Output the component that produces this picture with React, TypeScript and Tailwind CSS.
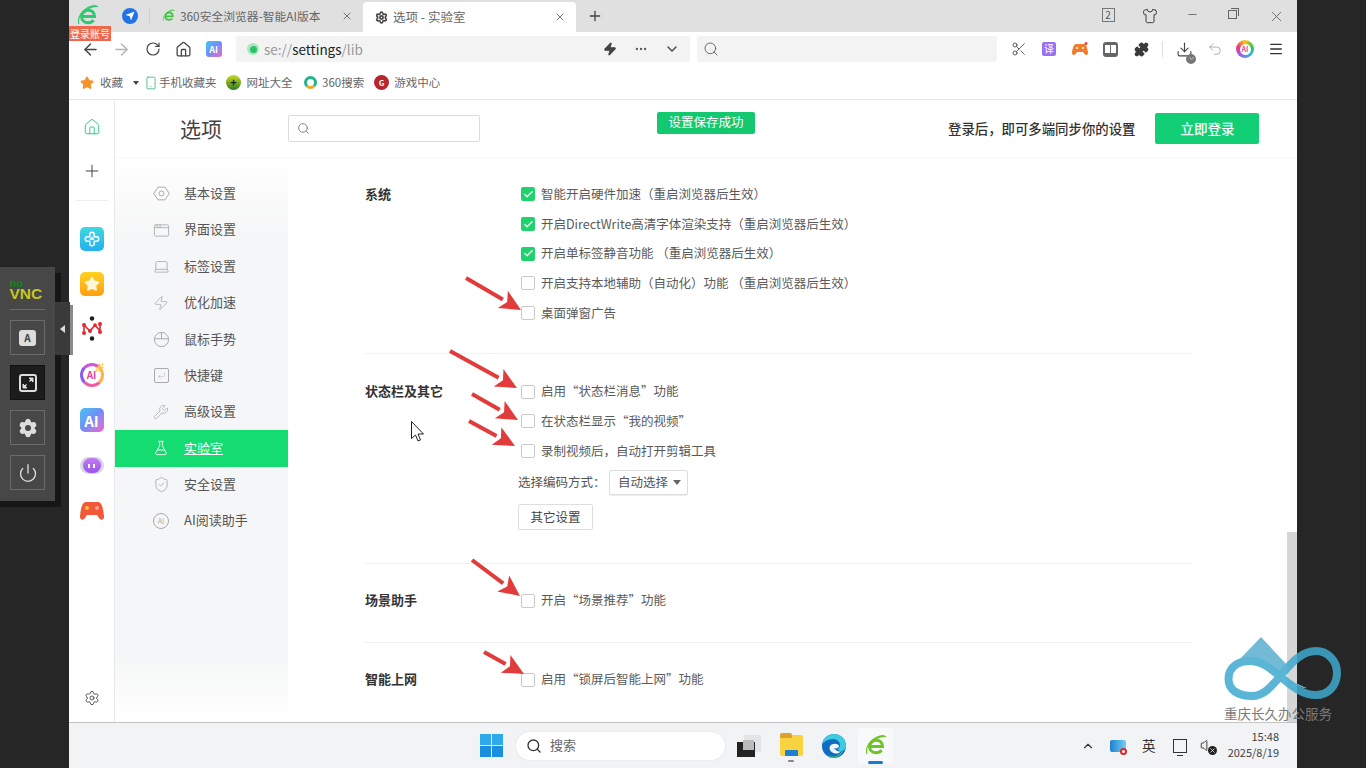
import React from "react";
import {
  ArrowLeft, ArrowRight, RotateCw, House, Zap, Ellipsis, ChevronDown, Search, Scissors, Puzzle, Download,
  Undo2, Menu, X, Plus, Minus, Shirt, Star, Smartphone, Settings, AppWindow, Laptop, Wrench,
  FlaskConical, ShieldCheck, Power, Check, ChevronUp, CornerDownLeft, Sparkles, Volume,
} from "lucide-react";

function ELogo({ size = 22, color = "#2fc96f" }: { size?: number; color?: string }) {
  return (
    <svg width={size} height={size} viewBox="0 0 24 24" fill="none">
      <path d="M6 12.5h12.5c0-4-2.8-6.3-6.2-6.3S5.6 9 5.6 12.5s2.8 6.2 6.6 6.2c2.4 0 4.2-1 5.4-2.5" stroke={color} strokeWidth="3" />
      <path d="M3 20C1 15 5 5 16 2c2-.5 4-.5 5 .5-4-.5-13 3-15 9" stroke={color} strokeWidth="1.2" />
    </svg>
  );
}

function Tile({ from, children }: { from: string; children: React.ReactNode }) {
  return <div className={`flex h-[24px] w-[24px] items-center justify-center rounded-[5px] ${from}`}>{children}</div>;
}

function RailIcons() {
  return [
    <Tile key="a" from="bg-gradient-to-b from-[#3fd8e0] to-[#25b0ee]">
      <svg width="18" height="18" viewBox="0 0 24 24" fill="none" stroke="#fff" strokeWidth="2">
        <path d="M9 6a3 3 0 0 1 6 0v3h3a3 3 0 0 1 0 6h-3v3a3 3 0 0 1-6 0v-3H6a3 3 0 0 1 0-6h3z" />
        <path d="M9 12h6M12 9v3" />
      </svg>
    </Tile>,
    <Tile key="b" from="bg-gradient-to-b from-[#ffd21f] to-[#ff9e12]">
      <Star size={16} fill="#fff7d8" stroke="#fff7d8" />
    </Tile>,
    <svg key="c" width="24" height="26" viewBox="0 0 24 26" fill="none">
      <path d="M4 9l6 6 5-6 5 6M4 9v7M20 8v7" stroke="#e8262f" strokeWidth="1.6" />
      <circle cx="4" cy="9" r="2" fill="#e8262f" /><circle cx="20" cy="8" r="2" fill="#e8262f" />
      <circle cx="4" cy="17" r="2" fill="#e8262f" /><circle cx="20" cy="16" r="2" fill="#e8262f" />
      <circle cx="10" cy="15" r="2" fill="#e8262f" /><circle cx="15" cy="9" r="1.8" fill="#e8262f" />
      <circle cx="12" cy="2.5" r="2.2" fill="#1c1c1c" /><circle cx="12" cy="22.5" r="2.2" fill="#1c1c1c" />
    </svg>,
    <div key="d" className="relative flex h-[24px] w-[24px] items-center justify-center rounded-full border-[3px] border-l-[#8a5cf0] border-t-[#d354d9] border-r-[#ffb14a] border-b-[#ef5fa0]">
      <span className="text-[10px] font-bold leading-none text-[#e0479c]">AI</span>
      <Sparkles size={9} fill="#ffc533" stroke="#ffc533" className="absolute -right-[3px] -top-[3px]" />
    </div>,
    <Tile key="e" from="bg-gradient-to-br from-[#38c4f5] via-[#6f8cf6] to-[#f05bc9]">
      <span className="text-[15px] font-bold leading-none text-white">AI</span>
    </Tile>,
    <div key="f" className="flex h-[17px] w-[24px] items-center justify-center rounded-full bg-[#d8d8e2]">
      <div className="flex h-[15px] w-[18px] items-center justify-center gap-[3px] rounded-full bg-gradient-to-b from-[#c27af5] to-[#9a54ea]">
        <span className="h-[4px] w-[2px] bg-white" /><span className="h-[4px] w-[2px] bg-white" />
      </div>
    </div>,
    <svg key="g" width="24" height="20" viewBox="0 0 24 20">
      <path d="M6 1h12c3 0 5 4 6 14 .3 4-3 5-5 2l-2-3H7l-2 3c-2 3-5.300 2-5-2C1 5 3 1 6 1z" fill="#f2593a" />
      <circle cx="7" cy="7" r="2" fill="#ffc533" /><circle cx="17" cy="7" r="2" fill="#f8a18d" />
    </svg>,
  ];
}

const NAV: [string, React.ReactNode][] = [
  ["基本设置", <svg width="17" height="17" viewBox="0 0 24 24" fill="none" stroke="currentColor" strokeWidth="1.4"><path d="M7 3h10l6 9-6 9H7l-6-9z" /><circle cx="12" cy="12" r="3.500" /></svg>],
  ["界面设置", <AppWindow size={17} strokeWidth={1.2} />],
  ["标签设置", <Laptop size={17} strokeWidth={1.2} />],
  ["优化加速", <Zap size={16} strokeWidth={1.2} />],
  ["鼠标手势", <svg width="17" height="17" viewBox="0 0 24 24" fill="none" stroke="currentColor" strokeWidth="1.4"><rect x="2" y="2" width="20" height="20" rx="10" /><path d="M2 11h20M12 2v9" /></svg>],
  ["快捷键", <CornerDownLeft size={15} strokeWidth={1.2} className="rounded-[2px] border border-[#aaa] p-[2px]" />],
  ["高级设置", <Wrench size={16} strokeWidth={1.2} />],
  ["实验室", <FlaskConical size={16} strokeWidth={1.4} />],
  ["安全设置", <ShieldCheck size={17} strokeWidth={1.2} />],
  ["AI阅读助手", <span className="flex h-[16px] w-[16px] items-center justify-center rounded-full border border-[#aaa] text-[7px]">AI</span>],
];

function Row({ text, on = false }: { text: string; on?: boolean }) {
  return (
    <div className="flex h-[29.7px] items-center">
      {on ? (
        <span className="flex h-[14px] w-[14px] items-center justify-center rounded-[2px] bg-[#1fd26e]">
          <Check size={11} strokeWidth={2.6} color="#fff" />
        </span>
      ) : (
        <span className="h-[14px] w-[14px] rounded-[2px] border border-[#c9c9c9] bg-white" />
      )}
      <span className="ml-[6px] whitespace-nowrap text-[12.5px] text-[#5a5a5a]">{text}</span>
    </div>
  );
}

function Section({ label, pt, pb, children, last }: { label: string; pt: string; pb: string; children: React.ReactNode; last?: boolean }) {
  return (
    <div className={`flex ${pt} ${pb} ${last ? "" : "border-b border-[#f2f2f2]"}`}>
      <div className="h-[29.7px] w-[157px] pl-px text-[13px] font-bold leading-[27px] text-[#333]">{label}</div>
      <div className="flex flex-col">{children}</div>
    </div>
  );
}

const ARROWS = [
  [466, 278, 521, 310],
  [450, 351, 517, 388],
  [472, 394, 518, 420],
  [469, 421, 515, 446],
  [472, 560, 520, 596],
  [484, 652, 524, 674],
];

function Arrow({ a }: { a: number[] }) {
  const [x1, y1, x2, y2] = a;
  const len = Math.hypot(x2 - x1, y2 - y1);
  const ux = (x2 - x1) / len, uy = (y2 - y1) / len;
  const bx = x2 - ux * 21, by = y2 - uy * 21;
  const nx = -uy, ny = ux;
  return (
    <>
      <line x1={x1} y1={y1} x2={bx} y2={by} stroke="#e23b3b" strokeWidth="4" />
      <polygon points={`${x2},${y2} ${bx + nx * 10},${by + ny * 10} ${bx + ux * 5},${by + uy * 5} ${bx - nx * 10},${by - ny * 10}`} fill="#e23b3b" />
    </>
  );
}

function VncButton({ children, active }: { children: React.ReactNode; active?: boolean }) {
  return (
    <div className={`flex h-[35px] w-[35px] items-center justify-center border ${active ? "border-[#111] bg-[#1c1c1c]" : "border-[#6a6a6a]"}`}>
      {children}
    </div>
  );
}

export default function App() {
  return (
    <div className="relative flex h-[768px] w-[1366px] overflow-hidden bg-[#262626] font-['Noto_Sans_CJK_SC','Noto_Sans',sans-serif]">
      <div className="w-[69px] shrink-0" />
      <div className="flex w-[1228px] shrink-0 flex-col bg-white">
        {/* tab strip */}
        <div className="flex h-[32px] shrink-0 items-center bg-[#e0e0e0]">
          <div className="flex w-[38px] justify-center"><ELogo size={24} /></div>
          <div className="ml-[15px] flex h-[16px] w-[16px] items-center justify-center rounded-full bg-[#2273e6]">
            <svg width="10" height="10" viewBox="0 0 10 10"><path d="M9.500.5 6 9.500 4.800 5.200.5 4z" fill="#fff" /></svg>
          </div>
          <div className="ml-[11px] h-[16px] w-px bg-[#cdcdcd]" />
          <div className="flex h-full w-[212px] items-center pl-[12px]">
            <ELogo size={14} color="#3fc43f" />
            <span className="ml-[4px] whitespace-nowrap text-[11.8px] text-[#666]">360安全浏览器-智能AI版本</span>
            <X size={12} strokeWidth={1.6} color="#555" className="ml-auto mr-[9px]" />
          </div>
          <div className="ml-px flex h-[30px] w-[213px] items-center self-end rounded-t-[4px] bg-white pl-[12px]">
            <Settings size={13} strokeWidth={3} color="#444" />
            <span className="ml-[5px] whitespace-nowrap text-[12.5px] text-[#666]">选项 - 实验室</span>
            <X size={12} strokeWidth={1.6} color="#555" className="ml-auto mr-[10px]" />
          </div>
          <Plus size={16} strokeWidth={2} color="#444" className="ml-[11px]" />
          <div className="ml-auto flex">
            <div className="flex w-[42px] justify-center">
              <span className="flex h-[14px] w-[13px] items-center justify-center border border-[#777] text-[10px] leading-none text-[#555]">2</span>
            </div>
            <div className="flex w-[42px] justify-center"><Shirt size={16} strokeWidth={1.4} color="#333" /></div>
            <div className="flex w-[42px] justify-center"><Minus size={13} color="#777" /></div>
            <div className="flex w-[42px] justify-center">
              <span className="relative mr-[3px] mt-[2px] h-[9px] w-[9px] border border-[#666]"><span className="absolute -right-[3px] -top-[3px] h-[8px] w-[8px] border-r border-t border-[#666]" /></span>
            </div>
            <div className="flex w-[42px] justify-center"><X size={17} strokeWidth={1.1} color="#555" /></div>
          </div>
        </div>
        {/* toolbar */}
        <div className="flex h-[34px] shrink-0 items-center">
          <div className="flex w-[6px]" />
          {[
            <ArrowLeft key="1" size={19} strokeWidth={1.8} color="#444" />,
            <ArrowRight key="2" size={19} strokeWidth={1.8} color="#b4b4b4" />,
            <RotateCw key="3" size={16} strokeWidth={1.8} color="#444" />,
            <House key="4" size={17} strokeWidth={1.8} color="#444" />,
            <span key="5" className="mr-[2px] flex h-[16px] w-[16px] items-center justify-center rounded-[3px] bg-gradient-to-br from-[#38c4f5] via-[#6f8cf6] to-[#f05bc9] text-[9px] font-bold leading-none text-white">AI</span>,
          ].map((ic, i) => (
            <div key={i} className="flex w-[31px] justify-center">{ic}</div>
          ))}
          <div className="ml-[6px] flex h-[26px] w-[454px] items-center rounded-[3px] bg-[#f3f3f3] pl-[11px]">
            <span className="flex h-[12px] w-[12px] items-center justify-center rounded-full bg-[#a9e8c0]"><span className="h-[7px] w-[7px] rounded-full bg-[#2cc26a]" /></span>
            <span className="ml-[5px] text-[13.5px] text-[#999]">se://<span className="text-[#222]">settings</span>/lib</span>
            <Zap size={14} fill="#444" color="#444" className="ml-auto" />
            <Ellipsis size={14} color="#555" className="ml-[17px]" />
            <ChevronDown size={16} strokeWidth={2} color="#444" className="ml-[16px] mr-[10px]" />
          </div>
          <div className="ml-[7px] flex h-[26px] w-[300px] items-center rounded-[3px] bg-[#f3f3f3] pl-[6px]">
            <Search size={16} strokeWidth={1.3} color="#555" />
          </div>
          <div className="ml-[6px] flex w-[31px] justify-center"><Scissors size={16} strokeWidth={1.4} color="#555" /></div>
          <div className="flex w-[30px] justify-center">
            <span className="flex h-[14px] w-[14px] items-center justify-center rounded-[2px] bg-[#9a6ff0] text-[10px] leading-none text-white">译</span>
          </div>
          <div className="flex w-[31px] justify-center">
            <svg width="16" height="14" viewBox="0 0 16 14">
              <path d="M4 2h8c2 0 3 3 4 8 .3 3-2 4-3.500 2L11 10H5l-1.500 2C2 14-.3 13 0 10c1-5 2-8 4-8z" fill="#f07c2c" />
              <circle cx="5" cy="6" r="1" fill="#fff" /><circle cx="11" cy="6" r="1" fill="#fff" /><circle cx="14" cy="1.500" r="1.500" fill="#ee3b3b" />
            </svg>
          </div>
          <div className="flex w-[31px] justify-center">
            <span className="flex h-[15px] w-[15px] items-center justify-center gap-px rounded-[3px] bg-[#666]">
              <span className="h-[8px] w-[5px] bg-white" /><span className="h-[8px] w-[5px] bg-white" />
            </span>
          </div>
          <div className="flex w-[31px] justify-center"><Puzzle size={15} fill="#3a3a3a" color="#3a3a3a" /></div>
          <div className="ml-[5px] h-[16px] w-px bg-[#e0e0e0]" />
          <div className="relative ml-[6px] flex w-[30px] justify-center">
            <Download size={17} strokeWidth={1.6} color="#444" />
            <span className="absolute bottom-[-6px] right-[3px] flex h-[10px] w-[10px] items-center justify-center rounded-full bg-[#777]"><ChevronDown size={7} color="#fff" /></span>
          </div>
          <div className="flex w-[31px] justify-center"><Undo2 size={16} strokeWidth={1.4} color="#aaa" /></div>
          <div className="flex w-[30px] justify-center">
            <span className="flex h-[18px] w-[18px] items-center justify-center rounded-full bg-[conic-gradient(#f5c518,#35c65c,#2fb0ee,#9a5cf0,#ee3b7b,#f5c518)]">
              <span className="flex h-[11px] w-[11px] items-center justify-center rounded-full bg-white text-[7px] font-bold leading-none text-[#e0479c]">AI</span>
            </span>
          </div>
          <div className="flex w-[31px] justify-center"><Menu size={16} strokeWidth={2} color="#333" /></div>
        </div>
        {/* bookmarks */}
        <div className="flex h-[34px] shrink-0 items-center border-b border-[#e6e6e6] pl-[11px] text-[11.5px] text-[#666]">
          <Star size={14} fill="#f5922a" color="#f5922a" />
          <span className="ml-[6px]">收藏</span>
          <span className="ml-[10px] h-0 w-0 border-x-[3px] border-t-[4px] border-x-transparent border-t-[#444]" />
          <Smartphone size={14} strokeWidth={1.4} color="#35b36f" className="ml-[5px]" />
          <span className="ml-px">手机收藏夹</span>
          <span className="ml-[9.5px] flex h-[15px] w-[15px] items-center justify-center rounded-full bg-gradient-to-b from-[#c7dc1e] to-[#2a7d22] text-[11px] font-bold leading-none text-[#222]">+</span>
          <span className="ml-[5.5px]">网址大全</span>
          <span className="ml-[11px] h-[13px] w-[13px] rounded-full border-[3px] border-[#1db588] border-b-[#f5a623]" />
          <span className="ml-[5.5px]">360搜索</span>
          <span className="ml-[10px] flex h-[15px] w-[15px] items-center justify-center rounded-full bg-[#b8252d] text-[8px] font-bold leading-none text-white">G</span>
          <span className="ml-[5px]">游戏中心</span>
        </div>
        {/* body */}
        <div className="flex min-h-0 flex-1">
          <div className="flex w-[46px] shrink-0 flex-col items-center border-r border-[#e8e8e8]">
            <div className="flex h-[54px] items-center"><House size={18} strokeWidth={1.3} color="#2fc98a" /></div>
            <div className="flex h-[34px] items-center"><Plus size={20} strokeWidth={1} color="#222" /></div>
            <div className="mt-[12px] h-px w-[32px] bg-[#eeeeee]" />
            <div className="mt-[15px] flex flex-col">
              {RailIcons().map((ic, i) => (
                <div key={i} className="flex h-[45.4px] items-center justify-center">{ic}</div>
              ))}
            </div>
            <Settings size={16} strokeWidth={1.5} color="#555" className="mb-[16px] mt-auto" />
          </div>
          <div className="flex min-w-0 flex-1 flex-col">
            {/* header */}
            <div className="flex h-[58px] shrink-0 items-center border-b border-[#f8f8f8]">
              <span className="ml-[65px] text-[21px] text-[#444]">选项</span>
              <div className="ml-[66px] flex h-[27px] w-[192px] items-center rounded-[2px] border border-[#dcdcdc] pl-[8px]">
                <Search size={13} strokeWidth={1.4} color="#666" />
              </div>
              <div className="ml-[177px] mb-[12px] flex h-[22px] w-[98px] items-center justify-center rounded-[2px] bg-[#14c870] text-[12.5px] text-white">设置保存成功</div>
              <span className="ml-[193px] whitespace-nowrap text-[13.4px] font-medium text-[#333]">登录后，即可多端同步你的设置</span>
              <div className="ml-[20px] flex h-[31px] w-[104px] items-center justify-center rounded-[2px] bg-[#12cf76] text-[13.5px] font-medium text-white">立即登录</div>
            </div>
            <div className="flex min-h-0 flex-1">
              <div className="w-[173px] shrink-0 bg-[linear-gradient(#fff_0,#f5f6f7_80px,#f5f6f7_500px,#fff_560px)] pt-[17.5px]">
                {NAV.map(([t, ic]) => {
                  const active = t === "实验室";
                  return (
                    <div key={t} className={`flex h-[36.4px] items-center ${active ? "bg-[#14dc70] text-white" : "text-[#555]"}`}>
                      <div className={`flex w-[69px] justify-center pl-[23px] ${active ? "text-white" : "text-[#aaa]"}`}>{ic}</div>
                      <span className={`pb-[2px] text-[13px] ${active ? "underline" : ""}`}>{t}</span>
                    </div>
                  );
                })}
              </div>
              <div className="ml-[76px] w-[828px] shrink-0">
                <Section label="系统" pt="pt-[21.5px]" pb="pb-[25px]">
                  <Row on text="智能开启硬件加速（重启浏览器后生效）" />
                  <Row on text="开启DirectWrite高清字体渲染支持（重启浏览器后生效）" />
                  <Row on text="开启单标签静音功能 （重启浏览器后生效）" />
                  <Row text="开启支持本地辅助（自动化）功能 （重启浏览器后生效）" />
                  <Row text="桌面弹窗广告" />
                </Section>
                <Section label="状态栏及其它" pt="pt-[23px]" pb="pb-[33px]">
                  <Row text="启用“状态栏消息”功能" />
                  <Row text="在状态栏显示“我的视频”" />
                  <Row text="录制视频后，自动打开剪辑工具" />
                  <div className="-ml-[3px] mt-[3px] flex h-[26px] items-center">
                    <span className="w-[91px] text-[12.5px] text-[#555]">选择编码方式：</span>
                    <div className="flex h-[25px] w-[79px] items-center rounded-[2px] border border-[#ddd] pl-[8px] text-[12.5px] text-[#555] shadow-[0_1px_1px_#eee]">
                      自动选择
                      <span className="ml-[5px] h-0 w-0 border-x-[4px] border-t-[5px] border-x-transparent border-t-[#666]" />
                    </div>
                  </div>
                  <div className="-ml-[3px] mt-[9px] flex h-[26px] w-[75px] items-center justify-center rounded-[2px] border border-[#ddd] text-[12.5px] text-[#444]">其它设置</div>
                </Section>
                <Section label="场景助手" pt="pt-[22px]" pb="pb-[26px]">
                  <Row text="开启“场景推荐”功能" />
                </Section>
                <Section label="智能上网" pt="pt-[22px]" pb="pb-0" last>
                  <Row text="启用“锁屏后智能上网”功能" />
                </Section>
              </div>
              <div className="ml-auto flex w-[10px] shrink-0 flex-col">
                <div className="h-[374px] shrink-0" />
                <div className="flex-1 bg-[#d6d6d6]" />
              </div>
            </div>
          </div>
        </div>
        {/* taskbar */}
        <div className="flex h-[46px] shrink-0 items-center border-t border-[#c4c4c4] bg-[#f1f3f5]">
          <div className="ml-[411px] grid h-[23px] w-[23px] grid-cols-2 gap-[1px]">
            <span className="bg-[#2fa8ec]" /><span className="bg-[#2fa8ec]" /><span className="bg-[#1a8fe0]" /><span className="bg-[#1a8fe0]" />
          </div>
          <div className="ml-[13px] flex h-[28px] w-[209px] items-center rounded-full bg-white pl-[10px] shadow-[0_0_2px_#d8d8d8]">
            <Search size={16} strokeWidth={2} color="#333" />
            <span className="ml-[8px] pb-[2px] text-[13px] text-[#666]">搜索</span>
          </div>
          <div className="relative ml-[12px] h-[22px] w-[24px]">
            <span className="absolute right-0 top-0 h-[17px] w-[17px] bg-[#e2e4e6]" />
            <span className="absolute bottom-0 left-0 h-[15px] w-[18px] bg-[#222]" />
            <span className="absolute left-[6px] top-[5px] h-[10px] w-[11px] bg-[#bbb]" />
          </div>
          <div className="relative ml-[19px] h-[21px] w-[23px] rounded-[2px] bg-[#f9d23f]">
            <span className="absolute -top-[2px] left-0 h-[5px] w-[12px] rounded-t-[2px] bg-[#dfa12e]" />
            <span className="absolute bottom-0 left-[5px] h-[6px] w-[13px] rounded-t-[1px] bg-[#1f7fd0]" />
            <span className="absolute -bottom-[6px] left-[8px] h-[2px] w-[6px] rounded-full bg-[#888]" />
          </div>
          <svg width="24" height="24" viewBox="0 0 24 24" className="ml-[19px]">
            <circle cx="12" cy="12" r="12" fill="#0f6cc0" />
            <path d="M12 0c7 0 12 5 12 12 0 3-2 5-5 5-2 0-3-1-3-2 1-1 2-2 2-4 0-3-3-6-7-6C5 5 1 9 .3 10 1.500 4 6 0 12 0z" fill="#3ccbe0" />
            <path d="M22 15c-2 6-7 9-11 9-3 0-4-1-5-3 3 2 7 2 10 0 2-1 4-4 6-6z" fill="#34c27a" />
            <path d="M8 12c2-3 8-3 9-0 0 2-3 3-5 2 2 3 5 4 7 3-3 4-9 3-11-1-.6-1-.6-3 0-4z" fill="#f1f3f5" />
          </svg>
          <div className="relative ml-[12px] flex h-[36px] w-[35px] items-center justify-center rounded-[3px] bg-[#f8f9fa]">
            <ELogo size={24} color="#6cc524" />
            <span className="absolute bottom-0 left-[10px] h-[3px] w-[15px] rounded-full bg-[#1a78d0]" />
          </div>
          <ChevronUp size={14} strokeWidth={2} color="#333" className="ml-[188px]" />
          <div className="relative ml-[15px] h-[12px] w-[16px] rounded-[2px] bg-gradient-to-r from-[#1f7fd0] to-[#6fd0f0]">
            <span className="absolute -bottom-[3px] -right-[1px] h-[7px] w-[7px] rounded-full border-2 border-[#d8242c] bg-white" />
          </div>
          <span className="ml-[16px] w-[16px] text-[13.5px] leading-none text-[#333]">英</span>
          <div className="relative ml-[15px] h-[14px] w-[14px] border border-[#333]">
            <span className="absolute -bottom-[4px] left-[3px] h-[3px] w-[6px] border-b border-[#333]" />
          </div>
          <div className="relative ml-[13px] h-[16px] w-[16px]">
            <Volume size={15} strokeWidth={1.5} color="#333" />
            <span className="absolute -bottom-[1px] right-[-1px] flex h-[9px] w-[9px] items-center justify-center rounded-full bg-[#222]"><X size={7} strokeWidth={2.5} color="#fff" /></span>
          </div>
          <div className="ml-auto mr-[18px] flex flex-col items-end pb-[2px] text-[11px] leading-[15.5px] text-[#444]">
            <span>15:48</span>
            <span>2025/8/19</span>
          </div>
        </div>
      </div>

      {/* login badge */}
      <div className="absolute left-[69px] top-[26px] flex h-[15px] w-[42px] items-center justify-center bg-[#f0684c] text-[10px] leading-none text-white">登录账号</div>

      {/* noVNC control bar */}
      <div className="absolute left-0 top-[273px] h-[234px] w-[61px] bg-[#161616]" />
      <div className="absolute left-[55px] top-[302px] flex h-[53px] w-[15px] items-center justify-center bg-[#3a3a3a]">
        <span className="h-0 w-0 border-y-[4px] border-r-[5px] border-y-transparent border-r-[#ddd]" />
      </div>
      <div className="absolute left-[70px] top-[305px] h-[50px] w-[3px] bg-[#8a8a8a]" />
      <div className="absolute left-0 top-[267px] flex h-[234px] w-[55px] flex-col items-center bg-[#474747]">
        <div className="mt-[11px] flex h-[22px] w-[36px] flex-col font-['Liberation_Sans',sans-serif] font-bold">
          <span className="h-[10px] text-[11px] leading-[10px] text-[#0b8a16]">no</span>
          <span className="h-[12px] text-[15.5px] leading-[12px] text-[#c4c81c]">VNC</span>
        </div>
        <div className="mt-[9px] h-px w-[35px] bg-[#6a6a6a]" />
        <div className="mt-[10px] flex flex-col gap-[10px]">
          <VncButton><span className="flex h-[16px] w-[17px] items-center justify-center rounded-[3px] bg-[#ddd] text-[10px] font-bold leading-none text-[#444]">A</span></VncButton>
          <VncButton active>
            <span className="relative h-[18px] w-[18px] rounded-[3px] border-2 border-[#ddd]">
              <svg width="14" height="14" viewBox="0 0 14 14" fill="none" className="absolute left-0 top-0">
                <path d="M8 2h4v4zM6 12H2V8z" fill="#ddd" stroke="#ddd" />
                <path d="M8.500 5.500 11 3M5.500 8.500 3 11" stroke="#ddd" strokeWidth="1.4" />
              </svg>
            </span>
          </VncButton>
          <VncButton>
            <span className="relative flex h-[20px] w-[20px] items-center justify-center">
              <Settings size={20} fill="#ddd" color="#ddd" strokeWidth={2} />
              <span className="absolute h-[6px] w-[6px] rounded-full bg-[#474747]" />
            </span>
          </VncButton>
          <VncButton><Power size={20} strokeWidth={1.6} color="#ddd" /></VncButton>
        </div>
      </div>

      {/* annotation arrows + cursor */}
      <svg width="1366" height="768" className="pointer-events-none absolute left-0 top-0">
        {ARROWS.map((a, i) => <Arrow key={i} a={a} />)}
        <path d="M411.500 421.500v17l4-3.500 2.500 6 2.500-1-2.500-6h5.500z" fill="#fff" stroke="#222" strokeWidth="1" />
      </svg>

      {/* watermark */}
      <div className="pointer-events-none absolute left-[1224px] top-[636px] flex w-[118px] flex-col">
        <svg width="118" height="66" viewBox="0 0 118 66" fill="none" className="opacity-85">
          <path d="M37 1 63 29 56 37C46 28 36 22 24 22L16 23z" fill="#5aaed0" />
          <path d="M30 26C44 30 60 42 83 52 72 53 56 44 42 34 38 31 34 28 30 26z" fill="#7cc6de" />
          <path d="M4.500 43C4.500 30 16 24 28 25 40 26 48 34 58 42 68 50 78 59 92 59 104 59 113 50 113 37 113 24 103 15 92 15 78 15 68 26 58 38 48 50 40 60 28 60 14 60 4.500 54 4.500 43Z" stroke="#3fa9cf" strokeWidth="8" />
        </svg>
        <span className="mt-[3px] whitespace-nowrap text-[13.5px] leading-[16px] text-[#7a7a7a]">重庆长久办公服务</span>
      </div>
    </div>
  );
}
